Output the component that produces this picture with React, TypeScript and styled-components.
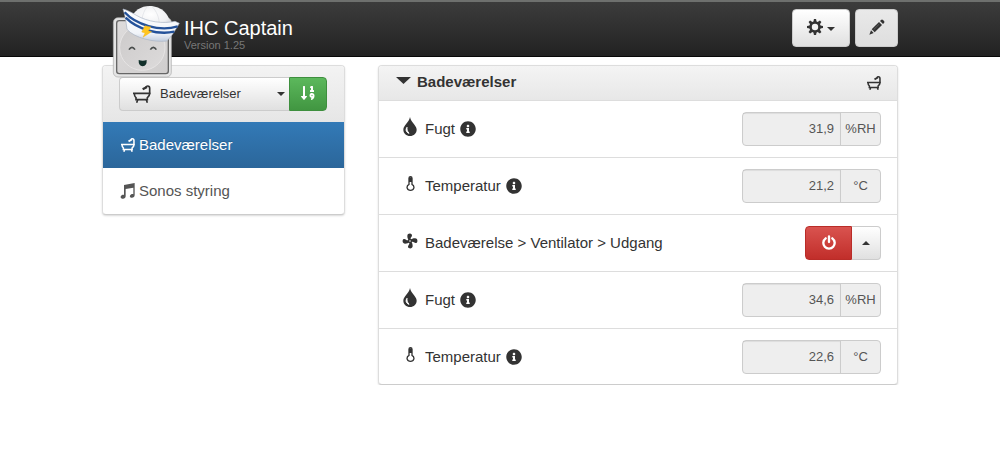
import React from "react";
import styled, { createGlobalStyle, css } from "styled-components";
import { FaInfoCircle, FaSortNumericDown } from "react-icons/fa";

const GlobalStyle = createGlobalStyle`
  * { box-sizing: border-box; }
  body {
    margin: 0;
    background: #fff;
    color: #333;
    font: 15px/22px "Liberation Sans", Arial, sans-serif;
  }
  button, input, select { font: inherit; color: inherit; margin: 0; }
  svg { display: block; flex: none; }
`;

const Container = styled.div`
  width: 100%;
  max-width: 796px;
  margin: 0 auto;
`;

const Header = styled.header`
  background: linear-gradient(#3c3c3c, #222);
  border-top: 2px solid #6e706e;
  border-bottom: 1px solid #080808;
`;

const HeaderBar = styled(Container)`
  position: relative;
  display: flex;
  justify-content: space-between;
  align-items: center;
  height: 54px;
  padding-left: 82px;
  padding-bottom: 2px;
`;

const LogoSlot = styled.div`
  position: absolute;
  left: 10px;
  top: 1px;
  z-index: 2;
`;

const AppName = styled.h1`
  margin: 0;
  padding-top: 12px;
  font-size: 20px;
  font-weight: 400;
  line-height: 22px;
  color: #fff;
`;

const Version = styled.div`
  font-size: 11px;
  line-height: 12px;
  color: #777;
`;

const Toolbar = styled.div`
  display: flex;
  gap: 5px;
`;

const buttonFace = css`
  display: flex;
  align-items: center;
  justify-content: center;
  padding: 0;
  border: 1px solid #ccc;
  border-radius: 4px;
  background: linear-gradient(#fff, #e0e0e0);
  cursor: pointer;
`;

const ToolButton = styled.button<{ $wide?: boolean; $pressed?: boolean }>`
  ${buttonFace}
  gap: 4px;
  width: ${(p) => (p.$wide ? 58 : 43)}px;
  height: 38px;
  padding-bottom: 3px;
  ${(p) => p.$pressed && "background: linear-gradient(#e9e9e9, #dedede);"}
`;

const GearCaret = styled.span`
  padding-top: 4px;
`;

const Columns = styled(Container)`
  display: flex;
  align-items: flex-start;
  gap: 33px;
  padding-top: 8px;
`;

const Panel = styled.section`
  border: 1px solid #ddd;
  border-bottom-color: #ccc;
  border-radius: 4px;
  background: #fff;
  box-shadow: 0 1px 2px rgba(0, 0, 0, 0.15);
  overflow: hidden;
`;

const Sidebar = styled(Panel)`
  flex: 0 0 243px;
`;

const Main = styled(Panel)`
  flex: 1;
`;

const SidebarTop = styled.div`
  display: flex;
  padding: 11px 17px 11px 16px;
  background: linear-gradient(#f3f3f3, #e6e6e6);
`;

const SelectWrap = styled.div`
  position: relative;
  flex: 1;
`;

const RoomSelect = styled.select`
  appearance: none;
  display: block;
  width: 100%;
  height: 34px;
  padding: 0 24px 0 40px;
  border: 1px solid #ccc;
  border-right: 0;
  border-radius: 4px 0 0 4px;
  background: linear-gradient(#fff, #e0e0e0);
  font-size: 13px;
`;

const SelectIcon = styled.span`
  position: absolute;
  left: 14px;
  top: 8px;
  pointer-events: none;
`;

const SelectCaret = styled.span`
  position: absolute;
  right: 4px;
  top: 15px;
  pointer-events: none;
`;

const SortButton = styled.button`
  ${buttonFace}
  width: 38px;
  height: 34px;
  padding-bottom: 2px;
  border-color: #3e8f3e;
  border-radius: 0 4px 4px 0;
  background: linear-gradient(#5cb85c, #419641);
  color: #fff;
`;

const NavLink = styled.a<{ $active?: boolean }>`
  display: flex;
  align-items: center;
  gap: 4px;
  height: 46px;
  padding: 0 17px;
  color: ${(p) => (p.$active ? "#fff" : "#555")};
  ${(p) => p.$active && "background: linear-gradient(#337ab7, #2b669a); text-shadow: 0 -1px 0 #286090;"}
  text-decoration: none;
`;

const NavIcon = styled.span`
  display: flex;
  justify-content: center;
  width: 15px;
`;

const PanelHeading = styled.div`
  display: flex;
  align-items: center;
  gap: 6px;
  height: 35px;
  padding: 0 16px 0 17px;
  border-bottom: 1px solid #ddd;
  background: linear-gradient(#f4f4f4, #e7e7e7);
`;

const PanelTitle = styled.h2`
  flex: 1;
  margin: 0;
  padding-bottom: 3px;
  font-size: 15px;
  line-height: 22px;
`;

const HeadingCaret = styled.span`
  padding-bottom: 6px;
`;

const Row = styled.div`
  display: flex;
  align-items: center;
  padding: 11px 16px 11px 23px;
  & + & { border-top: 1px solid #ddd; }
  &:last-child { padding-bottom: 10px; }
`;

const RowIcon = styled.span`
  display: flex;
  justify-content: center;
  width: 16px;
  margin-right: 7px;
  padding-bottom: 5px;
`;

const RowLabel = styled.label`
  display: flex;
  flex: 1;
  align-items: center;
  gap: 5px;
`;

const Readout = styled.div`
  display: flex;
  width: 139px;
  height: 34px;
  border: 1px solid #ccc;
  border-radius: 4px;
  background: #eee;
  color: #555;
  font-size: 13px;
`;

const Value = styled.input`
  flex: 1;
  min-width: 0;
  padding: 0 6px;
  border: 0;
  background: none;
  box-shadow: inset 0 1px 1px rgba(0, 0, 0, 0.075);
  text-align: right;
`;

const Unit = styled.span`
  display: flex;
  align-items: center;
  justify-content: center;
  width: 40px;
  border-left: 1px solid #ccc;
`;

const ButtonGroup = styled.div`
  display: flex;
`;

const PowerButton = styled.button`
  ${buttonFace}
  width: 47px;
  height: 34px;
  padding-bottom: 2px;
  border-color: #b92c28;
  border-radius: 4px 0 0 4px;
  background: linear-gradient(#d9534f, #c12e2a);
  color: #fff;
`;

const MoreButton = styled.button`
  ${buttonFace}
  width: 29px;
  height: 34px;
  border-left: 0;
  border-radius: 0 4px 4px 0;
`;

const Caret = ({ w = 8, h = 4, up = false }: { w?: number; h?: number; up?: boolean }) => (
  <svg width={w} height={h} viewBox="0 0 8 4" preserveAspectRatio="none" fill="#333">
    <path d={up ? "M0 4h8L4 0z" : "M0 0h8L4 4z"} />
  </svg>
);

const Bathtub = ({ size }: { size: number }) => (
  <svg width={size} height={size} viewBox="0 0 54 54" fill="none" stroke="currentColor" strokeWidth={size < 16 ? 6 : 5}>
    <path d="M0 25H52M4 25Q4 35 9 38V44H43V38Q50 34 50 25" />
    <path d="M14 44L11 53M40 44L43 53" />
    <path d="M50 28V10Q50 3 44 3Q40 3 38 7" />
    <path d="M29 13L42 6" strokeWidth="7" />
  </svg>
);

const Music = () => (
  <svg width="15" height="16" viewBox="0 0 45 48" fill="currentColor">
    <path d="M12 6L44 0V36C44 42 39 45 34 44C28 43 28 37 34 34C36 33 38 33 40 34V14L17 18V40C17 46 11 49 6 47C0 45 1 39 6 36C8 35 11 35 12 36Z" />
  </svg>
);

const Gear = () => (
  <svg width="16" height="16" viewBox="0 0 30 30">
    <g fill="#333">
      {[0, 45, 90, 135].map((a) => (
        <path key={a} d="M13 0h4l1 5v20l-1 5h-4l-1-5v-20z" transform={`rotate(${a} 15 15)`} />
      ))}
      <circle cx="15" cy="15" r="10.8" />
    </g>
    <circle cx="15" cy="15" r="6" fill="#f4f4f4" />
  </svg>
);

const Pencil = () => (
  <svg width="16" height="16" viewBox="0 0 48 48" fill="#333">
    <path d="M36 3Q39 0 42 3L45 6Q48 9 45 12L42 15L33 6Z" />
    <path d="M30 9L39 18L17 40L8 31Z" />
    <path d="M6 34L14 42L1 47Z" />
    <path d="M14 32L31 15" stroke="#8a8a8a" strokeWidth="1.5" />
  </svg>
);

const Drop = () => (
  <svg width="14" height="19" viewBox="0 0 42 57">
    <path d="M21 0C24 17 41 25 41 38C41 49 32 57 21 57S1 49 1 38C1 25 18 17 21 0Z" fill="#333" />
    <path d="M12 31C7 38 9 46 18 49C13 43 11 38 12 31Z" fill="#fff" stroke="#fff" strokeWidth="3" />
  </svg>
);

const Thermometer = () => (
  <svg width="9" height="15" viewBox="0 0 27 45">
    <path d="M9 25V7Q9 2 13.5 2T18 7V25C28 31 24 43 13.500 43S-1 31 9 25Z" fill="#fff" stroke="#333" strokeWidth="4" />
    <path d="M9 4h9v14H9z" fill="#333" />
  </svg>
);

const Fan = () => (
  <svg width="16" height="16" viewBox="0 0 48 48" fill="#333">
    {[0, 90, 180, 270].map((a) => (
      <path key={a} d="M21 24C18 19 16 15 16 9C16 3 21 1 26 2C31 3 31 9 28 12C25 15 26 19 27 22Z" transform={`rotate(${a} 24 24)`} />
    ))}
    <circle cx="24" cy="24" r="6" />
    <circle cx="24" cy="24" r="2.5" fill="#fff" />
  </svg>
);

const Power = () => (
  <svg width="14" height="15" viewBox="0 0 42 45" fill="none" stroke="currentColor" strokeWidth="7" strokeLinecap="round">
    <path d="M11 10A17 17 0 1 0 31 10M21 4V21" />
  </svg>
);

const Logo = () => (
  <svg width="68" height="75" viewBox="51 9 204 225" role="img" aria-label="IHC Captain">
    <defs>
      <linearGradient id="plate" x1="0" y1="0" x2="1" y2="1">
        <stop offset="0" stopColor="#dedcdc" />
        <stop offset="1" stopColor="#cfcdcd" />
      </linearGradient>
      <linearGradient id="face" x1="0" y1="0" x2="1" y2="1">
        <stop offset="0" stopColor="#cccaca" />
        <stop offset="1" stopColor="#dddbdb" />
      </linearGradient>
      <radialGradient id="dome" cx=".5" cy=".4" r=".65">
        <stop offset="0" stopColor="#ffffff" />
        <stop offset=".7" stopColor="#eff0f2" />
        <stop offset="1" stopColor="#d0d3da" />
      </radialGradient>
      <linearGradient id="brim" x1="0" y1="0" x2="0" y2="1">
        <stop offset="0" stopColor="#fff" />
        <stop offset=".75" stopColor="#f1f4f9" />
        <stop offset="1" stopColor="#c3cede" />
      </linearGradient>
    </defs>
    <rect x="55" y="53" width="174" height="178" rx="14" fill="#e4e4e4" stroke="#aaa" strokeWidth="2" />
    <rect x="65" y="62" width="155" height="159" rx="8" fill="url(#plate)" stroke="#666" strokeWidth="4" />
    <circle cx="142" cy="143" r="68" fill="url(#face)" stroke="#e6e4e4" strokeWidth="3" />
    <path d="M102 149Q111 135 120 149M166 149Q175 135 184 149" fill="none" stroke="#484c4b" strokeWidth="5" />
    <path d="M131 180Q143 184 155 180Q156 198 143 199Q130 198 131 180Z" fill="#12302b" />
    <path d="M108 56C116 32 138 18 164 18C200 18 226 44 226 80C186 84 140 78 108 56Z" fill="url(#dome)" />
    <path d="M158 19C148 30 142 44 140 66M170 19C186 34 193 54 193 76" fill="none" stroke="#dcdee3" strokeWidth="2" />
    <path d="M84 27C96 30 110 37 124 46C158 66 206 72 240 64L253 70C240 92 228 112 215 123C178 128 118 114 96 88C93 64 90 44 84 27Z" fill="url(#brim)" stroke="#a9b3c4" strokeWidth="2" />
    <path d="M89 37C122 74 194 96 248 79M92 53C126 87 188 106 238 95" fill="none" stroke="#24529a" strokeWidth="7" />
    <path d="M150 77L168 81L160 92L170 95L144 112L150 99L140 96Z" fill="#ffc51f" stroke="#f0ac10" strokeWidth="1" />
  </svg>
);

type Sensor = { id: string; kind: "humidity" | "temperature"; value: string };

const SensorRow = ({ id, kind, value }: Sensor) => (
  <Row>
    <RowIcon>{kind === "humidity" ? <Drop /> : <Thermometer />}</RowIcon>
    <RowLabel htmlFor={id}>
      {kind === "humidity" ? "Fugt" : "Temperatur"}
      <FaInfoCircle size={16} />
    </RowLabel>
    <Readout>
      <Value id={id} value={value} readOnly />
      <Unit>{kind === "humidity" ? "%RH" : "°C"}</Unit>
    </Readout>
  </Row>
);

export default function App() {
  return (
    <>
      <GlobalStyle />
      <Header>
        <HeaderBar>
          <LogoSlot><Logo /></LogoSlot>
          <div>
            <AppName>IHC Captain</AppName>
            <Version>Version 1.25</Version>
          </div>
          <Toolbar>
            <ToolButton $wide aria-label="Indstillinger"><Gear /><GearCaret><Caret /></GearCaret></ToolButton>
            <ToolButton $pressed aria-label="Rediger"><Pencil /></ToolButton>
          </Toolbar>
        </HeaderBar>
      </Header>
      <Columns as="main">
        <Sidebar as="nav">
          <SidebarTop>
            <SelectWrap>
              <RoomSelect aria-label="Rum"><option>Badeværelser</option></RoomSelect>
              <SelectIcon><Bathtub size={18} /></SelectIcon>
              <SelectCaret><Caret /></SelectCaret>
            </SelectWrap>
            <SortButton aria-label="Sorter"><FaSortNumericDown size={16} /></SortButton>
          </SidebarTop>
          <NavLink href="#bad" $active><NavIcon><Bathtub size={14} /></NavIcon>Badeværelser</NavLink>
          <NavLink href="#sonos"><NavIcon><Music /></NavIcon>Sonos styring</NavLink>
        </Sidebar>
        <Main>
          <PanelHeading>
            <HeadingCaret><Caret w={15} h={7} /></HeadingCaret>
            <PanelTitle>Badeværelser</PanelTitle>
            <Bathtub size={14} />
          </PanelHeading>
          <SensorRow id="fugt-1" kind="humidity" value="31,9" />
          <SensorRow id="temp-1" kind="temperature" value="21,2" />
          <Row>
            <RowIcon><Fan /></RowIcon>
            <RowLabel as="span">Badeværelse &gt; Ventilator &gt; Udgang</RowLabel>
            <ButtonGroup>
              <PowerButton aria-label="Tænd eller sluk"><Power /></PowerButton>
              <MoreButton aria-label="Flere valg"><Caret up /></MoreButton>
            </ButtonGroup>
          </Row>
          <SensorRow id="fugt-2" kind="humidity" value="34,6" />
          <SensorRow id="temp-2" kind="temperature" value="22,6" />
        </Main>
      </Columns>
    </>
  );
}
